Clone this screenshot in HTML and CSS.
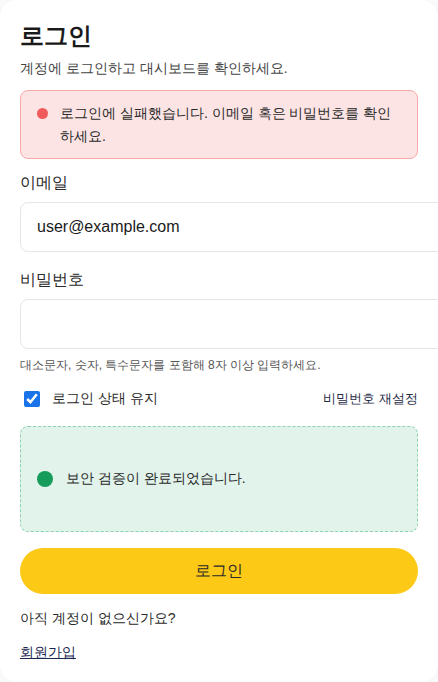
FILE: index.html
```html
<!DOCTYPE html>
<html lang="ko">
<head>
<meta charset="utf-8">
<link rel="stylesheet" href="styles.css">
</head>
<body>
<main class="card">
  <h1 class="title">로그인</h1>
  <p class="subtitle">계정에 로그인하고 대시보드를 확인하세요.</p>

  <div class="alert">
    <span class="alert-dot"></span>
    <p class="alert-text">로그인에 실패했습니다. 이메일 혹은 비밀번호를 확인하세요.</p>
  </div>

  <div class="field">
    <label class="label" for="email">이메일</label>
    <input class="input" id="email" type="email" value="user@example.com">
  </div>

  <div class="field field-pw">
    <label class="label" for="pw">비밀번호</label>
    <input class="input" id="pw" type="password">
    <p class="hint">대소문자, 숫자, 특수문자를 포함해 8자 이상 입력하세요.</p>
  </div>

  <div class="options">
    <label class="remember"><input type="checkbox" class="check" checked> 로그인 상태 유지</label>
    <a class="reset" href="#">비밀번호 재설정</a>
  </div>

  <div class="captcha">
    <span class="ok-dot"></span>
    <span class="captcha-text">보안 검증이 완료되었습니다.</span>
  </div>

  <button class="submit" type="button">로그인</button>

  <p class="signup-q">아직 계정이 없으신가요?</p>
  <a class="signup" href="#">회원가입</a>
</main>
</body>
</html>
```
FILE: styles.css
```css
* { box-sizing: border-box; }
html, body { margin: 0; padding: 0; background: #fafafa; }
body {
  font-family: "Liberation Sans", sans-serif;
  color: #222;
}
.card {
  background: #fff;
  border-radius: 16px;
  padding: 20px;
  width: 438px;
  min-height: 682px;
  box-shadow: 0 0 2px rgba(0,0,0,0.06);
  display: flex;
  flex-direction: column;
}
.title {
  margin: 0;
  font-size: 24px;
  font-weight: 700;
  line-height: 32px;
  color: #1a1a1a;
}
.subtitle {
  margin: 6px 0 0;
  font-size: 14px;
  line-height: 20px;
  color: #444;
}
.alert {
  margin-top: 12px;
  display: flex;
  align-items: flex-start;
  gap: 12px;
  padding: 11px 16px 10px;
  background: #fde4e4;
  border: 1px solid #f7a8a8;
  border-radius: 8px;
}
.alert-dot {
  flex: none;
  width: 11px;
  height: 11px;
  margin-top: 6px;
  border-radius: 50%;
  background: #f05a5a;
}
.alert-text {
  margin: 0;
  font-size: 14px;
  line-height: 23px;
  color: #2a2a2a;
}
.field {
  display: flex;
  flex-direction: column;
}
.label {
  margin-top: 12px;
  font-size: 16px;
  line-height: 24px;
  color: #2a2a2a;
  margin-bottom: 7px;
}
.field-pw .label { margin-top: 16px; }
.input {
  box-sizing: content-box;
  width: 100%;
  height: 24px;
  padding: 12px 16px;
  font: 16px "Liberation Sans", sans-serif;
  color: #1a1a1a;
  border: 1px solid #e6e6e6;
  border-radius: 8px;
  background: #fff;
  outline: none;
  margin: 0;
}
.hint {
  margin: 8px 0 0;
  font-size: 12px;
  line-height: 16px;
  color: #555;
}
.options {
  margin-top: 16px;
  height: 20px;
  display: flex;
  align-items: center;
  justify-content: space-between;
  padding-left: 4px;
}
.remember {
  display: flex;
  align-items: center;
  gap: 12px;
  font-size: 14px;
  color: #2a2a2a;
}
.check {
  margin: 0;
  width: 16px;
  height: 16px;
  accent-color: #1a73e8;
}
.reset {
  font-size: 13px;
  color: #1f2a44;
  text-decoration: none;
}
.captcha {
  margin-top: 17px;
  height: 106px;
  display: flex;
  align-items: center;
  gap: 13px;
  padding: 0 16px;
  background: #e1f3ea;
  border: 1px dashed #8fd3ae;
  border-radius: 8px;
}
.ok-dot {
  flex: none;
  width: 16px;
  height: 16px;
  border-radius: 50%;
  background: #169c5a;
}
.captcha-text {
  font-size: 14px;
  color: #2a2a2a;
}
.submit {
  margin-top: 16px;
  height: 46px;
  border: none;
  border-radius: 23px;
  background: #fcc916;
  font: 16px "Liberation Sans", sans-serif;
  color: #2a2a2a;
}
.signup-q {
  margin: 14px 0 0;
  font-size: 14px;
  line-height: 20px;
  color: #2a2a2a;
}
.signup {
  margin-top: 14px;
  align-self: flex-start;
  font-size: 14px;
  line-height: 20px;
  color: #1a2750;
  text-decoration: underline;
}
```
